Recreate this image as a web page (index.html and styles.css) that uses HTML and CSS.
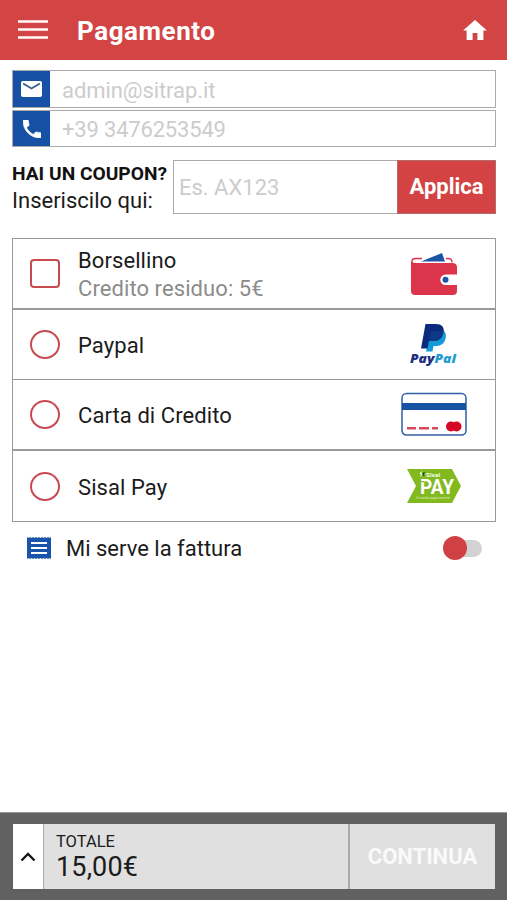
FILE: index.html
```html
<!DOCTYPE html>
<html lang="it">
<head>
<meta charset="utf-8">
<title>Pagamento</title>
<link rel="stylesheet" href="styles.css">
</head>
<body>
<div class="screen">
  <header class="topbar">
    <svg class="menu" viewBox="0 0 30 20"><path d="M0 1.500h30M0 9.500h30M0 17.500h30" stroke="#fff" stroke-width="2.600"/></svg>
    <h1 class="title">Pagamento</h1>
    <svg class="home" viewBox="2 3 20 17" preserveAspectRatio="none"><path fill="#fff" d="M10 20v-6h4v6h5v-8h3L12 3 2 12h3v8z"/></svg>
  </header>
  <main class="content">
    <div class="field">
      <span class="field-icon"><svg class="mail" viewBox="2 4 20 16" preserveAspectRatio="none"><rect x="2" y="4" width="20" height="16" rx="1.800" fill="#fff"/><path d="M4 6.500l8 5 8-5" fill="none" stroke="#33608f" stroke-width="1.700"/></svg></span>
      <span class="placeholder">admin@sitrap.it</span>
    </div>
    <div class="field">
      <span class="field-icon"><svg class="phone" viewBox="3 3 18 18"><path fill="#fff" d="M6.620 10.790c1.440 2.830 3.760 5.140 6.590 6.590l2.200-2.200c.27-.27.67-.36 1.020-.24 1.120.37 2.330.57 3.570.57.550 0 1 .45 1 1V20c0 .55-.45 1-1 1C10.610 21 3 13.390 3 4c0-.55.45-1 1-1h3.500c.55 0 1 .45 1 1 0 1.250.2 2.450.57 3.570.11.35.030.74-.25 1.020z" stroke="#fff" stroke-width=".6"/></svg></span>
      <span class="placeholder tight">+39 3476253549</span>
    </div>
    <section class="coupon">
      <div class="coupon-label"><strong>HAI UN COUPON?</strong><span>Inseriscilo qui:</span></div>
      <div class="coupon-input">Es. AX123</div>
      <div class="apply">Applica</div>
    </section>
    <section class="methods">
      <div class="method">
        <span class="check square"></span>
        <div class="method-text"><span>Borsellino</span><span class="sub">Credito residuo: 5€</span></div>
        <div class="logo wallet"><svg width="48" height="46" viewBox="0 0 48 46">
          <path d="M11 9.500 32 1l3 8.500z" fill="#1d55a5"/><path d="M2 12V9q0-2.500 4-2.500h6M36 6.500h2q4 0 4 4" fill="none" stroke="#dc354b" stroke-width="1.400"/>
          <path d="M1 9q1 2 4 2h37q5 0 5 4v24q0 4-4 4H5q-4 0-4-4z" fill="#dc354b"/>
          <path d="M48 22.500H35.500a5.200 5.200 0 0 0 0 10.400H48z" fill="#fff"/><circle cx="35.500" cy="27.700" r="3" fill="#1d55a5"/></svg></div>
      </div>
      <div class="method">
        <span class="check"></span>
        <div class="method-text"><span>Paypal</span></div>
        <div class="logo"><svg width="50" height="46" viewBox="0 0 50 46">
          <path d="M22 9h12q4 3 2.500 9-2 7-9 7h-3l-1 5.500h-6.500z" fill="#129bda"/>
          <path d="M16.500 3H27q9 0 7.500 8.500Q33 20 25 20h-5l-1.500 7.500H12z" fill="#0b2a7b"/>
          <path d="M22 10h12q-1 10-10 10h-4z" fill="#0c3a89"/>
          <text x="1" y="42" font-family="Open Sans, sans-serif" font-weight="800" font-style="italic" font-size="12.800" textLength="46" lengthAdjust="spacingAndGlyphs"><tspan fill="#202f82">Pay</tspan><tspan fill="#229bd3">Pal</tspan></text></svg></div>
      </div>
      <div class="method">
        <span class="check"></span>
        <div class="method-text"><span>Carta di Credito</span></div>
        <div class="logo"><svg width="66" height="44" viewBox="0 0 66 44">
          <rect x="1" y="1.500" width="64" height="41.500" rx="4.500" fill="#fff" stroke="#315fa5" stroke-width="1.500"/>
          <path d="M1 11h64v7H1z" fill="#1753a3"/><path d="M6 36.200h9m3 0h10m3 0h6" stroke="#d9485a" stroke-width="2.500"/>
          <circle cx="50" cy="34.500" r="5" fill="#d50924"/><circle cx="55.500" cy="34.500" r="5" fill="#d50924"/></svg></div>
      </div>
      <div class="method">
        <span class="check"></span>
        <div class="method-text"><span>Sisal Pay</span></div>
        <div class="logo"><svg width="56" height="36" viewBox="0 0 56 36">
          <path d="M1 1h45l9 17-9 17H1l9-17z" fill="#81b91f"/>
          <path d="M16 3.500l-2 2 2 .5-1.500 2.500" fill="none" stroke="#fff" stroke-width="1"/><path d="M18.500 4l-1.500 2 1 2" fill="none" stroke="#24501e" stroke-width="1.300"/>
          <text x="20" y="8.500" fill="#fff" font-family="Roboto, sans-serif" font-weight="700" font-size="6" textLength="14">Sisal</text>
          <text x="14" y="25.500" fill="#fff" font-family="Roboto, sans-serif" font-weight="700" font-size="20" textLength="34" lengthAdjust="spacingAndGlyphs">PAY</text>
          <path d="M14 13h4v1.200h-4z" fill="#81b91f"/>
          <text x="10" y="31" fill="#d9ebb9" font-family="Roboto, sans-serif" font-size="3.600" textLength="34">Il mondo paga come te</text></svg></div>
      </div>
    </section>
    <div class="invoice">
      <svg class="receipt" viewBox="0 0 24 24"><path fill="#1854a8" d="M0 1l1.500 1L3 1l1.500 1L6 1l1.500 1L9 1l1.500 1L12 1l1.500 1L15 1l1.500 1L18 1l1.500 1L21 1l1.500 1L24 1v22l-1.500-1-1.500 1-1.500-1-1.500 1-1.500-1-1.500 1-1.500-1-1.500 1-1.500-1L9 23l-1.500-1L6 23l-1.500-1L3 23l-1.500-1L0 23z"/><path d="M4 7h16M4 12h16M4 17h16" stroke="#fff" stroke-width="2"/></svg>
      <span class="invoice-text">Mi serve la fattura</span>
      <span class="toggle"><span class="knob"></span></span>
    </div>
  </main>
  <footer class="footer">
    <div class="expand"><svg width="16" height="10" viewBox="0 0 16 10"><path d="M1.500 8.500 8 2l6.500 6.500" fill="none" stroke="#151515" stroke-width="2.300"/></svg></div>
    <div class="total"><span class="total-label">TOTALE</span><span class="amount">15,00€</span></div>
    <div class="continue">CONTINUA</div>
  </footer>
</div>
</body>
</html>
```
FILE: styles.css
```css
* { box-sizing: border-box; }
body { margin: 0; background: #fff; color: #1b1b1b; font-family: Roboto, "Liberation Sans", sans-serif; }
svg { display: block; flex: none; }
.screen { width: 507px; height: 900px; display: flex; flex-direction: column; overflow: hidden; white-space: nowrap; }
.topbar { height: 60px; flex: none; background: #d34545; display: flex; align-items: center; padding: 0 20px 0 18px; }
.menu { width: 30px; height: 20px; }
.title { margin: 2px 0 0 29px; font-size: 26px; line-height: 30px; font-weight: 700; color: #fff; letter-spacing: .55px; }
.home { width: 24px; height: 20px; margin-left: auto; }
.content { flex: 1; padding: 10px 11px 0 12px; }
.field { height: 38px; border: 1px solid #aaa; display: flex; align-items: center; margin-bottom: 2px; }
.field:nth-child(2) { height: 37px; margin-bottom: 0; }
.field-icon { width: 37px; align-self: stretch; background: #1751a5; display: flex; align-items: center; justify-content: center; }
.mail { width: 21px; height: 16px; }
.phone { width: 18px; height: 18px; }
.placeholder { margin: 3px 0 0 12px; font-size: 22px; line-height: 28px; color: #ccc; letter-spacing: -.08px; }
.tight { letter-spacing: -.18px; }
.coupon { display: flex; height: 54px; margin-top: 13px; }
.coupon-label { width: 161px; flex: none; display: flex; flex-direction: column; font-size: 22px; line-height: 28px; padding-top: 1px; }
.coupon-label strong { font-size: 19.200px; line-height: 26px; color: #111; }
.coupon-input { flex: 1; border: 1px solid #aaa; border-right: 0; padding-left: 5px; font-size: 22px; line-height: 54px; color: #ccc; }
.apply { width: 99px; background: #d34343; border: 1px solid #b56b6b; color: #fff; font-size: 22px; line-height: 51px; font-weight: 700; text-align: center; }
.methods { margin-top: 24px; border: 1px solid #999; height: 284px; display: grid; grid-template-rows: repeat(4, 1fr); }
.method { display: grid; grid-template-columns: 65px 1fr 122px; align-items: center; border-bottom: 1px solid #999; }
.method:nth-child(odd) { border-bottom-width: 2px; }
.method:last-child { border-bottom: 0; }
.check { width: 30px; height: 29px; border: 2px solid #c64b51; border-radius: 50%; margin: 1px 0 0 17px; }
.square { border-radius: 4px; }
.method-text { display: flex; flex-direction: column; font-size: 22px; line-height: 28px; padding-top: 4px; letter-spacing: .08px; }
.sub { color: #8b8b8b; }
.logo { display: flex; justify-content: center; }
.wallet { padding-top: 4px; }
.invoice { display: flex; align-items: center; height: 30px; margin-top: 11px; padding: 0 14px 0 15px; }
.receipt { width: 24px; height: 24px; }
.invoice-text { margin-left: 15px; font-size: 22px; line-height: 28px; margin-top: 2px; }
.toggle { width: 34px; height: 17px; border-radius: 9px; background: #d2d2d2; margin-left: auto; display: flex; align-items: center; }
.knob { width: 24px; height: 24px; flex: none; border-radius: 50%; background: #cf4144; margin-left: -5px; }
.footer { height: 88px; flex: none; border-top: 1px solid #999; background: #616161; display: flex; padding: 11px 12px 11px 13px; }
.expand { width: 30px; background: #fff; display: flex; align-items: center; justify-content: center; }
.total { flex: 1; background: #e0e0e0; border-left: 1px solid #aaa; padding: 8px 0 0 12px; display: flex; flex-direction: column; }
.total-label { font-size: 16.500px; line-height: 20px; }
.amount { font-size: 27px; line-height: 30px; letter-spacing: .15px; }
.continue { width: 147px; background: #e0e0e0; border-left: 2px solid #aaa; display: flex; align-items: center; justify-content: center; color: #fafafa; font-size: 22px; font-weight: 700; }
```
